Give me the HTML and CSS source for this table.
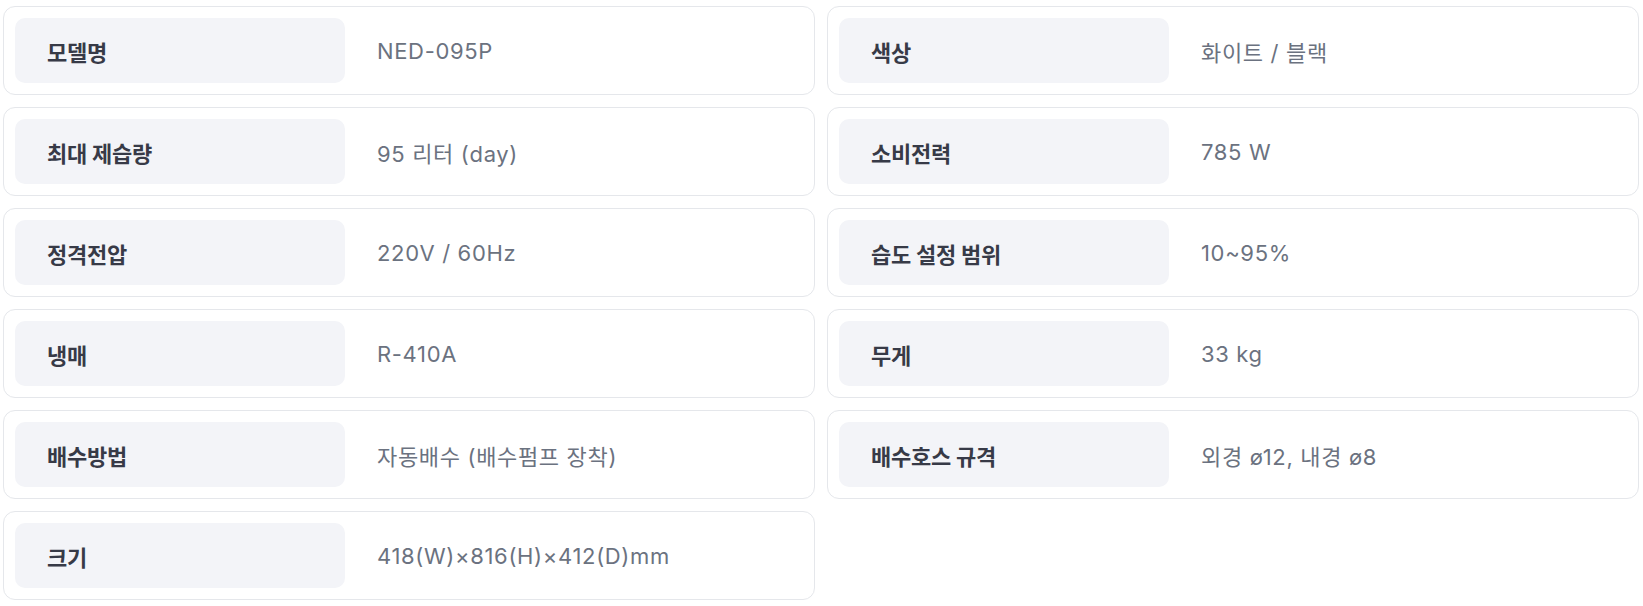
FILE: index.html
```html
<!DOCTYPE html>
<html lang="ko">
<head>
<meta charset="utf-8">
<title>제품 사양</title>
<link rel="stylesheet" href="styles.css">
</head>
<body>
<div class="specs">
  <div class="spec"><div class="spec-label">모델명</div><div class="spec-value">NED-095P</div></div>
  <div class="spec"><div class="spec-label">색상</div><div class="spec-value">화이트 / 블랙</div></div>
  <div class="spec"><div class="spec-label">최대 제습량</div><div class="spec-value">95 리터 (day)</div></div>
  <div class="spec"><div class="spec-label">소비전력</div><div class="spec-value">785 W</div></div>
  <div class="spec"><div class="spec-label">정격전압</div><div class="spec-value">220V / 60Hz</div></div>
  <div class="spec"><div class="spec-label">습도 설정 범위</div><div class="spec-value">10~95%</div></div>
  <div class="spec"><div class="spec-label">냉매</div><div class="spec-value">R-410A</div></div>
  <div class="spec"><div class="spec-label">무게</div><div class="spec-value">33 kg</div></div>
  <div class="spec"><div class="spec-label">배수방법</div><div class="spec-value">자동배수 (배수펌프 장착)</div></div>
  <div class="spec"><div class="spec-label">배수호스 규격</div><div class="spec-value">외경 ø12, 내경 ø8</div></div>
  <div class="spec"><div class="spec-label">크기</div><div class="spec-value">418(W)×816(H)×412(D)mm</div></div>
</div>
</body>
</html>
```
FILE: styles.css
```css
html, body {
  margin: 0;
  padding: 0;
  background: #ffffff;
}
body {
  font-family: Inter, "Noto Sans CJK KR", sans-serif;
}
.specs {
  display: grid;
  grid-template-columns: 1fr 1fr;
  column-gap: 12px;
  row-gap: 12px;
  padding: 6px 4px 0 3px;
}
.spec {
  display: flex;
  align-items: center;
  gap: 32px;
  padding: 11px;
  border: 1px solid #e5e7eb;
  border-radius: 12px;
  background: #ffffff;
}
.spec-label {
  flex: 0 0 330px;
  box-sizing: border-box;
  height: 65px;
  display: flex;
  align-items: center;
  padding: 0 32px;
  background: #f3f4f8;
  border-radius: 10px;
  font-size: 22px;
  font-weight: 700;
  color: #373a47;
  letter-spacing: -0.01em;
}
.spec-value {
  font-size: 22px;
  color: #6b7280;
  letter-spacing: 0.03em;
}
```
